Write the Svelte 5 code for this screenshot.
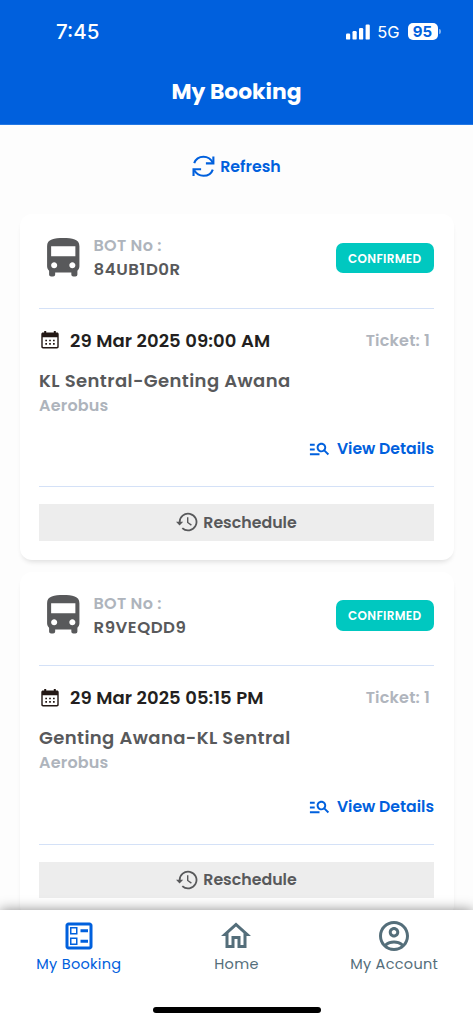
<script lang="ts">
	type Booking = {
		botNo: string;
		status: string;
		date: string;
		tickets: number;
		route: string;
		service: string;
	};

	const bookings: Booking[] = [
		{
			botNo: '84UB1D0R',
			status: 'CONFIRMED',
			date: '29 Mar 2025 09:00 AM',
			tickets: 1,
			route: 'KL Sentral-Genting Awana',
			service: 'Aerobus'
		},
		{
			botNo: 'R9VEQDD9',
			status: 'CONFIRMED',
			date: '29 Mar 2025 05:15 PM',
			tickets: 1,
			route: 'Genting Awana-KL Sentral',
			service: 'Aerobus'
		}
	];

	const tabs = [
		{
			label: 'My Booking',
			icon: 'M13 7.5h5v2h-5zm0 7h5v2h-5zM19 3H5c-1.1 0-2 .9-2 2v14c0 1.1.9 2 2 2h14c1.1 0 2-.9 2-2V5c0-1.1-.9-2-2-2zm0 16H5V5h14v14zM11 6H6v5h5V6zm-1 4H7V7h3v3zm1 3H6v5h5v-5zm-1 4H7v-3h3v3z'
		},
		{
			label: 'Home',
			icon: 'M12 5.69l5 4.5V18h-2v-6H9v6H7v-7.81l5-4.5M12 3L2 12h3v8h6v-6h2v6h6v-8h3L12 3z'
		},
		{
			label: 'My Account',
			icon: 'M12 2C6.48 2 2 6.48 2 12s4.48 10 10 10 10-4.48 10-10S17.52 2 12 2zM7.35 18.5C8.66 17.56 10.26 17 12 17s3.34.56 4.65 1.5c-1.31.94-2.91 1.5-4.65 1.5s-3.34-.56-4.65-1.5zm10.79-1.38C16.45 15.8 14.32 15 12 15s-4.45.8-6.14 2.12C4.7 15.73 4 13.95 4 12c0-4.42 3.58-8 8-8s8 3.58 8 8c0 1.95-.7 3.73-1.86 5.12zM12 6c-1.93 0-3.5 1.57-3.5 3.5S10.07 13 12 13s3.5-1.57 3.5-3.5S13.93 6 12 6zm0 5c-.83 0-1.5-.67-1.5-1.5S11.17 8 12 8s1.5.67 1.5 1.5S12.83 11 12 11z'
		}
	];

	let active = $state('My Booking');
</script>

<div class="screen">
	<header>
		<div class="status-bar">
			<span class="time">7:45</span>
			<div class="indicators">
				<svg class="signal" viewBox="0 0 24 16" fill="#fff">
					<rect x="0" y="9.6" width="4.2" height="6" rx="1.2" />
					<rect x="6.5" y="7" width="4.2" height="8.6" rx="1.2" />
					<rect x="13" y="4" width="4.2" height="11.6" rx="1.2" />
					<rect x="19.6" y="0.6" width="4.2" height="15" rx="1.2" />
				</svg>
				<span class="network">5G</span>
				<span class="battery">95</span>
				<span class="battery-tip"></span>
			</div>
		</div>
		<h1>My Booking</h1>
	</header>

	<main>
		<button class="refresh">
			<svg viewBox="0 0 24 24" fill="none" stroke="currentColor" stroke-width="2.2">
				<path d="M2.3 8.4C3.8 4.4 7.6 1.8 12 1.8c4.4 0 7.8 2.4 9.8 6.2" />
				<path d="M22.3 1.5v7.2H14.5" />
				<path d="M21.7 15.2C20.2 19.4 16.4 21.7 12 21.7c-4.4 0-7.7-2.3-9.7-5.7" />
				<path d="M1.6 22v-7.2h7.9" />
			</svg>
			<span>Refresh</span>
		</button>

		{#each bookings as booking}
			<article class="card">
				<div class="top">
					<svg class="bus" viewBox="0 0 24 24" fill="#58595b">
						<path
							d="M4 16c0 .88.39 1.67 1 2.22V20c0 .55.45 1 1 1h1c.55 0 1-.45 1-1v-1h8v1c0 .55.45 1 1 1h1c.55 0 1-.45 1-1v-1.78c.61-.55 1-1.34 1-2.22V6c0-3.5-3.58-4-8-4s-8 .5-8 4v10zm3.5 1c-.83 0-1.5-.67-1.5-1.5S6.67 14 7.5 14s1.5.67 1.5 1.5S8.33 17 7.5 17zm9 0c-.83 0-1.5-.67-1.5-1.5s.67-1.5 1.5-1.5 1.5.67 1.5 1.5-.67 1.5-1.5 1.5zm1.5-6H6V6h12v5z"
						/>
					</svg>
					<div class="bot">
						<span class="bot-label">BOT No :</span>
						<span class="bot-no">{booking.botNo}</span>
					</div>
					<span class="badge">{booking.status}</span>
				</div>

				<div class="trip">
					<div class="when">
						<svg class="calendar" viewBox="0 0 18 18">
							<path
								d="M3.2 0h2v1.5h7.6V0h2v1.5H16c1 0 1.7.7 1.7 1.7v12.6c0 1-.7 1.7-1.7 1.7H2c-1 0-1.7-.7-1.7-1.7V3.2c0-1 .7-1.7 1.7-1.7h1.2z"
								fill="#231815"
							/>
							<path d="M1.7 6.3h14.6v8.9c0 .5-.4.9-.9.9H2.6c-.5 0-.9-.4-.9-.9z" fill="#fff" />
							<path
								d="M4.3 9.5h1.7M8.15 9.5h1.7M12 9.5h1.7M4.3 12.9h1.7M8.15 12.9h1.7M12 12.9h1.7"
								stroke="#231815"
								stroke-width="1.7"
							/>
						</svg>
						<span class="date">{booking.date}</span>
						<span class="tickets">Ticket: {booking.tickets}</span>
					</div>
					<div class="route">{booking.route}</div>
					<div class="service">{booking.service}</div>
					<button class="details">
						<svg viewBox="0 0 24 24" fill="currentColor">
							<path
								d="M7 9H2V7h5v2zm0 3H2v2h5v-2zm13.59 7l-3.83-3.83c-.8.52-1.74.83-2.76.83-2.76 0-5-2.24-5-5s2.24-5 5-5 5 2.24 5 5c0 1.02-.31 1.96-.83 2.75L22 17.59 20.59 19zM17 11c0-1.65-1.35-3-3-3s-3 1.35-3 3 1.35 3 3 3 3-1.35 3-3zM2 19h10v-2H2v2z"
							/>
						</svg>
						<span>View Details</span>
					</button>
				</div>

				<button class="reschedule">
					<svg viewBox="0 0 22 20" fill="none" stroke="currentColor" stroke-width="1.8">
						<path d="M3.7 10.5a8.4 8.4 0 1 1 2.6 5.6" />
						<path d="M11.7 5.2v5.3l3.7 2.6" stroke-width="1.4" />
						<path d="M0 9.8h7.2L3.6 13.6z" fill="currentColor" stroke="none" />
					</svg>
					<span>Reschedule</span>
				</button>
			</article>
		{/each}
	</main>

	<nav>
		<div class="tabs">
			{#each tabs as tab}
				<button class="tab" class:active={active === tab.label} onclick={() => (active = tab.label)}>
					<svg viewBox="0 0 24 24" fill="currentColor"><path d={tab.icon} /></svg>
					<span>{tab.label}</span>
				</button>
			{/each}
		</div>
		<div class="home-indicator"></div>
	</nav>
</div>

<style>
	:global(body) {
		margin: 0;
	}

	.screen {
		display: flex;
		flex-direction: column;
		width: 100%;
		height: 1023px;
		overflow: hidden;
		background: #fdfdfd;
		font-family: Poppins, Inter, 'Liberation Sans', sans-serif;
	}

	.screen * {
		box-sizing: border-box;
	}

	button {
		padding: 0;
		border: 0;
		background: none;
		font: inherit;
		cursor: pointer;
	}

	svg {
		display: block;
		flex: none;
	}

	span {
		white-space: nowrap;
	}

	header {
		flex: none;
		height: 125px;
		background: #0060dd;
		border-bottom: 1px solid #2478e4;
		color: #fff;
	}

	.status-bar {
		display: flex;
		align-items: center;
		justify-content: space-between;
		height: 63px;
		padding: 0 32.5px 0 56px;
		font-family: Inter, 'Liberation Sans', sans-serif;
	}

	.time {
		font-size: 20.5px;
		font-weight: 500;
	}

	.indicators {
		display: flex;
		align-items: center;
	}

	.signal {
		width: 24px;
		height: 16px;
	}

	.network {
		margin-left: 7px;
		font-size: 16.5px;
	}

	.battery {
		margin-left: 8px;
		width: 30px;
		height: 17px;
		border-radius: 5px;
		background: #fff;
		color: #0060dd;
		font-size: 15px;
		font-weight: 700;
		line-height: 17px;
		text-align: center;
	}

	.battery-tip {
		width: 2px;
		height: 5px;
		margin-left: 1px;
		border-radius: 0 2px 2px 0;
		background: #7fb0ee;
	}

	h1 {
		margin: 0;
		font-size: 21.8px;
		font-weight: 700;
		line-height: 58px;
		text-align: center;
	}

	main {
		flex: 1;
		min-height: 0;
		overflow: hidden;
		padding: 0 19.5px;
	}

	.refresh {
		display: flex;
		align-items: center;
		gap: 5px;
		height: 83px;
		margin: 0 auto 6px;
		color: #0060dd;
		font-size: 15.8px;
		font-weight: 600;
	}

	.refresh svg {
		width: 23px;
		height: 23px;
	}

	.card {
		height: 346px;
		margin-bottom: 11.5px;
		padding: 0 19.5px;
		border-radius: 12px;
		background: #fff;
		box-shadow: 0 4px 5px -2px rgba(0, 0, 0, 0.12);
	}

	.top {
		display: flex;
		align-items: center;
		height: 94.5px;
		padding-bottom: 6px;
		border-bottom: 1.5px solid #d4e1f7;
	}

	.bus {
		width: 48.5px;
		height: 48.5px;
	}

	.bot {
		display: flex;
		flex: 1;
		flex-direction: column;
		margin-left: 6px;
		font-weight: 600;
		line-height: 24px;
	}

	.bot-label {
		color: #aeb4bc;
		font-size: 16px;
		letter-spacing: 0.3px;
	}

	.bot-no {
		color: #58595b;
		font-size: 16.6px;
		letter-spacing: 0.5px;
		line-height: 23px;
	}

	.badge {
		width: 98.5px;
		height: 30.5px;
		border-radius: 7px;
		background: #00c8c0;
		color: #fff;
		font-size: 12px;
		font-weight: 600;
		letter-spacing: 0.3px;
		line-height: 31px;
		text-align: center;
	}

	.trip {
		height: 178.5px;
		padding-top: 19.5px;
		border-bottom: 1.5px solid #d4e1f7;
	}

	.when {
		display: flex;
		align-items: center;
		height: 24px;
	}

	.calendar {
		width: 18px;
		height: 18px;
		margin: 0 11px 0 2px;
	}

	.date {
		flex: 1;
		color: #231f20;
		font-size: 18px;
		font-weight: 600;
		letter-spacing: 0.1px;
	}

	.tickets {
		margin-right: 4px;
		color: #b0b5bd;
		font-size: 16px;
		font-weight: 600;
		letter-spacing: 0.2px;
	}

	.route {
		margin-top: 15.5px;
		color: #58595b;
		font-size: 18px;
		font-weight: 600;
		letter-spacing: 0.4px;
		line-height: 26px;
	}

	.service {
		color: #aeb4bc;
		font-size: 16px;
		font-weight: 600;
		letter-spacing: 0.2px;
		line-height: 24px;
	}

	.details {
		display: flex;
		align-items: center;
		gap: 6px;
		height: 24px;
		margin: 19px 0 0 auto;
		color: #0060dd;
		font-size: 15.7px;
		font-weight: 600;
	}

	.details svg {
		width: 23px;
		height: 23px;
	}

	.reschedule {
		display: flex;
		align-items: center;
		justify-content: center;
		gap: 5px;
		width: 100%;
		height: 36.5px;
		margin-top: 17px;
		background: #ededed;
		color: #58595b;
		font-size: 15.8px;
		font-weight: 600;
	}

	.reschedule svg {
		width: 22px;
		height: 20px;
	}

	nav {
		position: relative;
		flex: none;
		height: 113px;
		background: #fff;
		box-shadow: 0 0 12px rgba(0, 0, 0, 0.45);
	}

	.tabs {
		display: grid;
		grid-template-columns: repeat(3, 1fr);
		height: 97px;
		padding-top: 8px;
	}

	.tab {
		display: flex;
		flex-direction: column;
		align-items: center;
		color: #546e7a;
		font-size: 14.5px;
		letter-spacing: 0.3px;
		line-height: 21.5px;
	}

	.tab svg {
		width: 36px;
		height: 36px;
	}

	.tab.active {
		color: #0060dd;
	}

	.home-indicator {
		width: 168px;
		height: 6px;
		margin: 0 auto;
		border-radius: 3px;
		background: #000;
	}
</style>
